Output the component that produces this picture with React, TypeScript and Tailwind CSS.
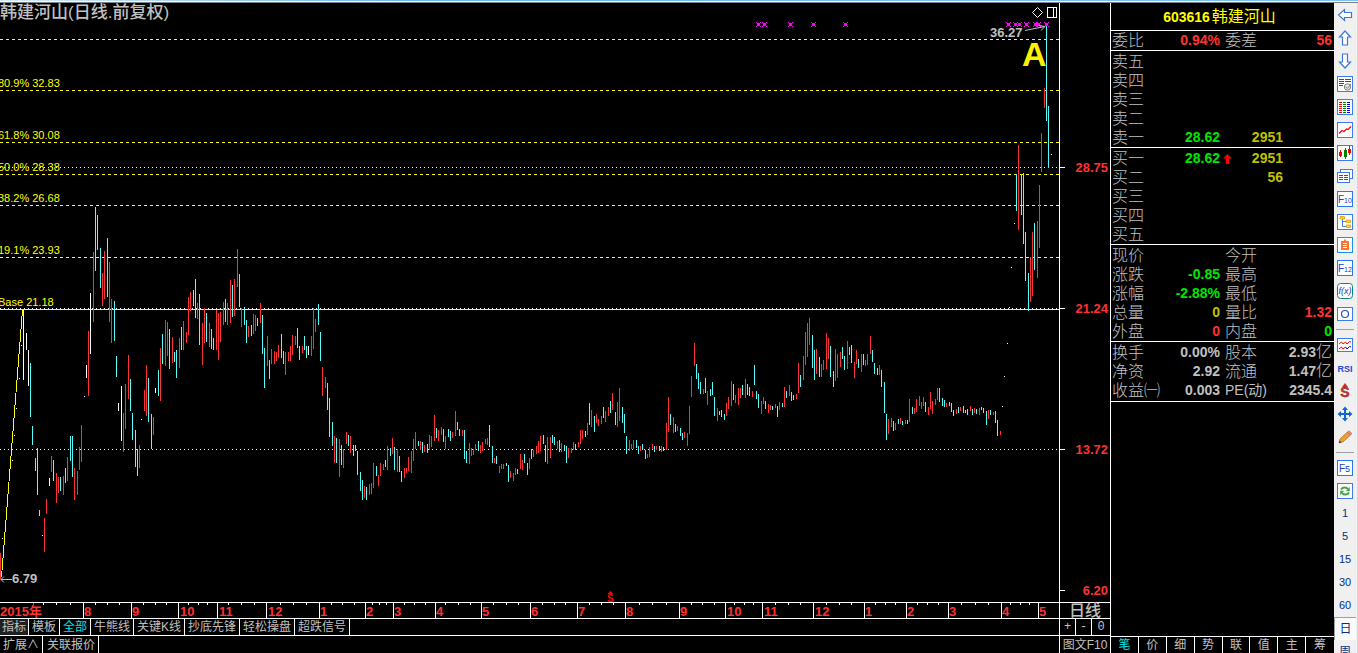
import type { ReactNode } from 'react';

type Bar = [x: number, top: number, bottom: number];

const RED_BARS: Bar[] = [
  [0, 553, 579], [44, 518, 552], [46, 499, 514], [51, 456, 472], [56, 473, 503], [58, 477, 493], [63, 476, 495],
  [67, 457, 481], [74, 468, 500], [77, 471, 495], [79, 447, 470], [81, 425, 462], [88, 331, 396], [93, 252, 322],
  [102, 273, 306], [104, 251, 299], [109, 262, 322], [111, 299, 343], [123, 413, 452], [125, 384, 429], [128, 355, 399],
  [139, 445, 468], [144, 390, 411], [146, 365, 416], [153, 417, 435], [160, 348, 401], [165, 320, 366], [167, 322, 356],
  [172, 337, 363], [179, 338, 368], [183, 321, 350], [186, 332, 343], [188, 297, 335], [190, 292, 311], [197, 303, 319],
  [202, 323, 365], [204, 308, 343], [209, 323, 347], [216, 310, 350], [218, 313, 360], [220, 312, 342], [223, 302, 325],
  [227, 303, 325], [230, 280, 323], [234, 279, 316], [237, 249, 287], [241, 308, 327], [248, 326, 337], [253, 314, 334],
  [255, 315, 331], [260, 303, 323], [267, 336, 366], [271, 349, 364], [274, 351, 364], [276, 352, 361], [278, 345, 358],
  [285, 352, 375], [288, 352, 361], [290, 346, 361], [292, 335, 355], [295, 336, 345], [302, 346, 353], [311, 336, 356],
  [313, 308, 349], [315, 319, 332], [322, 367, 396], [325, 377, 388], [334, 436, 463], [339, 439, 477], [343, 449, 468],
  [346, 432, 444], [350, 436, 453], [364, 486, 498], [369, 484, 495], [371, 483, 494], [373, 463, 488], [378, 475, 486],
  [380, 463, 476], [383, 464, 470], [387, 446, 470], [392, 438, 454], [397, 449, 472], [404, 468, 478], [406, 468, 473],
  [408, 457, 471], [411, 451, 473], [413, 439, 461], [415, 432, 449], [420, 441, 450], [424, 445, 452], [429, 435, 450],
  [431, 436, 447], [434, 415, 441], [438, 430, 441], [441, 427, 435], [445, 436, 449], [452, 432, 438], [455, 411, 436],
  [462, 430, 436], [469, 443, 464], [471, 448, 456], [473, 449, 455], [475, 444, 450], [480, 445, 453], [482, 442, 451],
  [485, 439, 444], [487, 438, 445], [494, 458, 463], [499, 466, 473], [501, 464, 469], [503, 464, 469], [510, 471, 478],
  [513, 473, 481], [515, 468, 475], [520, 454, 469], [522, 460, 470], [529, 458, 469], [533, 450, 457], [536, 446, 454],
  [538, 441, 453], [540, 436, 451], [547, 437, 464], [550, 437, 458], [557, 441, 449], [561, 443, 452], [568, 448, 458],
  [571, 448, 453], [573, 442, 450], [578, 442, 447], [580, 430, 444], [582, 430, 439], [587, 423, 435], [591, 410, 427],
  [596, 414, 423], [598, 419, 426], [601, 416, 424], [605, 411, 422], [608, 407, 416], [612, 393, 410], [617, 402, 427],
  [619, 388, 421], [629, 440, 451], [631, 444, 449], [633, 440, 449], [640, 446, 451], [647, 454, 458], [649, 447, 457],
  [652, 444, 449], [656, 446, 450], [661, 446, 452], [666, 423, 450], [668, 397, 432], [673, 417, 433], [677, 426, 431],
  [684, 432, 438], [687, 433, 446], [689, 406, 434], [691, 376, 397], [694, 343, 366], [703, 389, 394], [707, 391, 405],
  [717, 408, 421], [726, 403, 416], [728, 397, 409], [731, 381, 406], [735, 395, 403], [738, 388, 405], [740, 388, 398],
  [745, 379, 398], [752, 391, 397], [761, 401, 414], [763, 397, 404], [768, 404, 413], [770, 405, 410], [775, 404, 408],
  [779, 402, 410], [784, 387, 407], [789, 385, 396], [796, 394, 399], [798, 363, 393], [803, 356, 380], [805, 332, 365],
  [807, 323, 357], [809, 318, 345], [816, 349, 374], [821, 364, 377], [823, 360, 370], [826, 333, 369], [828, 338, 359],
  [835, 349, 381], [837, 354, 378], [840, 352, 367], [847, 341, 369], [854, 362, 378], [856, 350, 364], [861, 354, 372],
  [865, 360, 366], [867, 354, 365], [870, 336, 354], [879, 365, 375], [888, 419, 434], [891, 418, 427], [895, 423, 430],
  [900, 418, 424], [905, 420, 424], [909, 399, 422], [914, 408, 414], [916, 399, 412], [919, 396, 406], [921, 402, 409],
  [923, 397, 406], [928, 407, 415], [930, 392, 409], [932, 401, 414], [935, 399, 405], [937, 388, 400], [946, 403, 407],
  [956, 409, 414], [960, 407, 411], [970, 406, 411], [974, 408, 413], [979, 408, 415], [988, 410, 419], [993, 412, 415],
  [1000, 431, 435], [1018, 145, 230], [1030, 257, 302], [1032, 232, 296], [1037, 221, 278], [1039, 185, 248],
  [1041, 133, 172], [1044, 88, 108],
];

const CYAN_BARS: Bar[] = [
  [30, 363, 417], [32, 426, 445], [35, 458, 471], [37, 448, 495], [39, 510, 516], [53, 460, 481], [60, 477, 491],
  [65, 468, 483], [70, 436, 461], [72, 436, 477], [95, 207, 271], [97, 215, 250], [100, 248, 288], [107, 238, 297],
  [114, 301, 341], [116, 356, 377], [130, 379, 411], [132, 413, 440], [135, 430, 467], [137, 449, 476], [148, 378, 422],
  [151, 414, 449], [158, 370, 396], [162, 334, 364], [169, 329, 369], [174, 352, 362], [176, 350, 378], [181, 327, 350],
  [193, 290, 306], [195, 279, 318], [199, 294, 345], [206, 313, 342], [211, 329, 349], [213, 338, 350], [225, 299, 322],
  [232, 285, 317], [239, 274, 307], [244, 307, 325], [246, 320, 343], [251, 325, 336], [257, 318, 326], [262, 315, 354],
  [264, 348, 388], [269, 360, 379], [281, 334, 358], [283, 351, 364], [297, 328, 348], [299, 346, 360], [304, 336, 350],
  [306, 346, 358], [318, 304, 325], [320, 332, 361], [327, 383, 410], [329, 398, 437], [332, 422, 446], [336, 438, 463],
  [341, 445, 465], [348, 435, 446], [353, 445, 456], [355, 445, 451], [357, 451, 475], [360, 472, 491], [362, 480, 500],
  [366, 487, 500], [376, 466, 476], [385, 460, 467], [390, 448, 456], [394, 447, 470], [399, 456, 472], [401, 471, 482],
  [418, 441, 446], [422, 442, 453], [427, 444, 453], [436, 428, 438], [443, 429, 442], [448, 429, 437], [450, 431, 441],
  [457, 422, 430], [459, 429, 436], [464, 430, 459], [466, 451, 463], [478, 441, 451], [489, 425, 447], [492, 446, 463],
  [496, 456, 464], [506, 463, 466], [508, 465, 482], [517, 469, 474], [524, 454, 463], [527, 463, 475], [531, 449, 459],
  [543, 435, 444], [545, 445, 462], [552, 435, 443], [554, 437, 445], [559, 440, 452], [564, 445, 451], [566, 446, 463],
  [575, 444, 450], [585, 431, 437], [589, 403, 425], [594, 416, 432], [603, 407, 418], [610, 401, 413], [615, 412, 425],
  [622, 407, 423], [624, 414, 433], [626, 436, 454], [636, 440, 448], [638, 446, 454], [642, 444, 450], [645, 450, 459],
  [654, 446, 452], [659, 446, 451], [663, 447, 451], [670, 414, 425], [675, 424, 432], [680, 428, 436], [682, 433, 440],
  [696, 364, 379], [698, 373, 389], [700, 382, 394], [705, 378, 393], [710, 389, 396], [712, 382, 395], [714, 397, 416],
  [719, 411, 415], [721, 410, 417], [724, 414, 420], [733, 384, 400], [742, 385, 395], [747, 384, 395], [749, 387, 396],
  [754, 365, 385], [756, 391, 399], [758, 394, 408], [765, 401, 409], [772, 406, 410], [777, 406, 417], [782, 403, 407],
  [786, 391, 398], [791, 392, 401], [793, 395, 400], [800, 375, 387], [812, 335, 368], [814, 350, 380], [819, 357, 377],
  [830, 346, 377], [833, 371, 387], [842, 347, 359], [844, 356, 370], [849, 347, 355], [851, 345, 363], [858, 359, 368],
  [863, 354, 365], [872, 350, 362], [874, 363, 374], [877, 368, 375], [881, 370, 387], [884, 382, 413], [886, 414, 440],
  [893, 421, 431], [898, 419, 424], [902, 421, 425], [907, 420, 424], [912, 407, 414], [925, 402, 412], [939, 388, 402],
  [942, 398, 406], [944, 400, 407], [949, 402, 406], [951, 403, 412], [953, 410, 416], [958, 407, 413], [963, 406, 413],
  [965, 410, 413], [967, 409, 415], [972, 409, 415], [976, 409, 414], [981, 407, 410], [983, 408, 413], [986, 411, 425],
  [990, 410, 415], [995, 411, 423], [997, 420, 436], [1016, 174, 211], [1021, 174, 215], [1023, 173, 244],
  [1025, 232, 281], [1028, 273, 311], [1034, 223, 270], [1046, 26, 121], [1048, 106, 168],
];

const WHITE_BARS: Bar[] = [
  [2, 538, 539], [12, 460, 461], [14, 435, 436], [16, 408, 409], [19, 378, 379], [21, 345, 346], [23, 310, 380],
  [26, 333, 350], [28, 350, 386], [42, 535, 536], [49, 478, 486], [84, 396, 397], [86, 365, 378], [90, 293, 354],
  [118, 403, 411], [121, 386, 441], [141, 419, 420], [155, 388, 393], [308, 346, 355], [1002, 406, 407],
  [1004, 376, 377], [1007, 343, 344], [1009, 307, 308], [1011, 267, 268], [1014, 223, 224], [1051, 154, 155],
];

const FIB_LINES = [39, 90, 142, 174, 205, 257];

const FIB_LABELS = [
  { y: 87, text: '80.9% 32.83' },
  { y: 139, text: '61.8% 30.08' },
  { y: 171, text: '50.0% 28.38' },
  { y: 202, text: '38.2% 26.68' },
  { y: 254, text: '19.1% 23.93' },
  { y: 306, text: 'Base 21.18' },
];

const PRICES = [
  { y: 167, text: '28.75' },
  { y: 308, text: '21.24' },
  { y: 449, text: '13.72' },
  { y: 590, text: '6.20' },
];

const MARKERS = [758, 764, 790, 813, 845, 1008, 1015, 1019, 1026, 1035, 1038, 1046];

const MONTHS: [number, string][] = [
  [83, '8'], [131, '9'], [178, '10'], [217, '11'], [266, '12'], [319, '1'], [365, '2'], [393, '3'], [435, '4'],
  [481, '5'], [530, '6'], [577, '7'], [625, '8'], [679, '9'], [725, '10'], [762, '11'], [813, '12'], [864, '1'],
  [906, '2'], [948, '3'], [1001, '4'], [1038, '5'],
];

const WEEK_TICKS = [
  43, 56, 70, 95, 107, 119, 143, 155, 166, 188, 198, 207, 228, 241, 254, 280, 293, 306, 331, 342, 354, 372, 379, 386,
  404, 414, 425, 445, 458, 470, 493, 506, 518, 542, 554, 565, 589, 601, 613, 639, 652, 666, 691, 702, 714, 734, 744,
  753, 775, 788, 800, 826, 839, 851, 875, 885, 895, 917, 927, 938, 961, 975, 988, 1010, 1020, 1029,
];

const barPath = (bars: Bar[]) => bars.map(([x, top, bottom]) => `M${x + 0.5} ${top}V${bottom}`).join('');

const NUM = "font-['Liberation_Sans','Noto_Sans_CJK_SC',sans-serif] font-bold";

function KLineChart() {
  return (
    <svg viewBox="0 3 1110 599" className="block w-full h-auto shrink-0 overflow-visible" role="img" aria-label="韩建河山 日线">
      <g stroke="#ffff00" strokeDasharray="3 3" shapeRendering="crispEdges">
        {FIB_LINES.map((y) => (
          <path key={y} d={`M0 ${y + 0.5}H1059`} />
        ))}
      </g>
      <g stroke="#ffffff" strokeDasharray="1 3" shapeRendering="crispEdges">
        {[167, 308, 449].map((y) => (
          <path key={y} d={`M0 ${y + 0.5}H1059`} />
        ))}
      </g>
      <path d="M0 309.5H1059" stroke="#ffff00" shapeRendering="crispEdges" />

      <g fill="none" shapeRendering="crispEdges">
        <path d={barPath(RED_BARS)} stroke="#ff3232" />
        <path d={barPath(CYAN_BARS)} stroke="#54fcfc" />
        <path d={barPath(WHITE_BARS)} stroke="#ffffff" />
        <path d="M1.5 577L22.5 310" stroke="#ffff00" />
      </g>

      <g fill="#ffff00" className="font-['Liberation_Sans',sans-serif] text-[11px]">
        {FIB_LABELS.map((label) => (
          <text key={label.text} x="-2" y={label.y}>{label.text}</text>
        ))}
      </g>

      <g fill="#ff00ff" shapeRendering="crispEdges">
        {MARKERS.map((x) => (
          <path
            key={x}
            d={`M${x - 1} 23h3v3h-3zM${x - 2} 22h1v1h-1zM${x + 2} 22h1v1h-1zM${x - 2} 26h1v1h-1zM${x + 2} 26h1v1h-1z`}
          />
        ))}
      </g>

      <text x="0" y="18" fill="#c0c0c0" className="font-['Liberation_Sans','Noto_Sans_CJK_SC',sans-serif] text-[17px] font-medium">
        韩建河山(日线.前复权)
      </text>

      <g fill="#c0c0c0" className={`${NUM} text-[13px]`}>
        <text x="990" y="37">36.27</text>
        <text x="12" y="583">6.79</text>
      </g>
      <g fill="none" stroke="#c0c0c0">
        <path d="M1025 30.5L1045 26.5M1039 25.5L1045 26.5L1041 30.5" />
        <path d="M1 579.5H12M4 576.5L1 579.5L4 582.5" />
      </g>
      <text x="1022" y="66" fill="#fff000" className={`${NUM} text-[34px]`}>A</text>

      <g fill="none" stroke="#ffffff">
        <path d="M1037.5 7.5L1042.5 12.5L1037.5 17.5L1032.5 12.5Z" />
        <path d="M1047.5 7.5H1056.5V17.5H1047.5ZM1053.5 7.5V17.5" shapeRendering="crispEdges" />
      </g>

      <g fill="#ff0000">
        <path d="M610.5 591L613.5 594H607.5Z" />
        <text x="607" y="602" className={`${NUM} text-[10px]`}>S</text>
      </g>

      <path d="M1059.5 3V602" stroke="#ffffff" shapeRendering="crispEdges" />
      {PRICES.map((price) => (
        <g key={price.text}>
          <path d={`M1060 ${price.y + 0.5}H1065`} stroke="#ffffff" shapeRendering="crispEdges" />
          <text x="1108" y={price.y + 5} textAnchor="end" fill="#ff3232" className={`${NUM} text-[13px]`}>
            {price.text}
          </text>
        </g>
      ))}
    </svg>
  );
}

function TimeAxis() {
  return (
    <svg viewBox="0 602 1059 17" className="block flex-1 min-w-0 h-auto" role="img" aria-label="时间轴">
      <g fill="none" stroke="#ffffff" shapeRendering="crispEdges">
        <path d="M0 602.5H1059M0 618.5H1059" />
        <path d={MONTHS.map(([x]) => `M${x + 0.5} 602V618`).join('')} />
        <path d={WEEK_TICKS.map((x) => `M${x + 0.5} 602V605`).join('')} />
        <path d="M33.5 603V605" stroke="#ff3232" />
      </g>
      <g fill="#ff3232" className={`${NUM} text-[13px]`}>
        <text x="0" y="616">2015年</text>
        {MONTHS.map(([x, label]) => (
          <text key={x} x={label.length > 1 ? x + 2 : x + 1} y="616">{label}</text>
        ))}
      </g>
    </svg>
  );
}

function IndicatorTabs() {
  const tabs = ['牛熊线', '关键K线', '抄底先锋', '轻松操盘', '超跌信号'];

  return (
    <div className="flex h-[17px] shrink-0 border-b border-white text-xs leading-4">
      <button className="px-0.5 bg-[#202020] border-r border-white">指标</button>
      <button className="px-[3px] border-r border-white">模板</button>
      <button className="px-[3px] border-r border-white text-[#00e6e6]">全部</button>
      {tabs.map((tab) => (
        <button key={tab} className="px-[3px] border-r border-white">{tab}</button>
      ))}
      <div className="ml-auto flex w-[51px] border-l border-white font-['Liberation_Mono',monospace]">
        <button className="w-4 border-r border-white">+</button>
        <button className="w-4 border-r border-white">-</button>
        <button className="flex-1">0</button>
      </div>
    </div>
  );
}

function ExtendTabs() {
  return (
    <div className="flex h-[17px] shrink-0 text-xs leading-4">
      <button className="px-[3px] border-r border-white">扩展∧</button>
      <button className="pl-1 pr-[3px] border-r border-white">关联报价</button>
      <button className="ml-auto w-[51px] border-l border-white whitespace-nowrap">图文F10</button>
    </div>
  );
}

interface OrderRow {
  label: string;
  price?: string;
  up?: boolean;
  volume?: string;
}

const SELLS: OrderRow[] = [
  { label: '卖五' },
  { label: '卖四' },
  { label: '卖三' },
  { label: '卖二' },
  { label: '卖一', price: '28.62', volume: '2951' },
];

const BUYS: OrderRow[] = [
  { label: '买一', price: '28.62', up: true, volume: '2951' },
  { label: '买二', volume: '56' },
  { label: '买三' },
  { label: '买四' },
  { label: '买五' },
];

function OrderTable({ rows }: { rows: OrderRow[] }) {
  return (
    <div className="pt-px border-b border-white">
      <table className="w-full table-fixed border-collapse">
        <colgroup>
          <col className="w-[49px]" />
          <col className="w-[60px]" />
          <col className="w-3" />
          <col className="w-[51px]" />
          <col />
        </colgroup>
        <tbody>
          {rows.map((row) => (
            <tr key={row.label} className="h-[19px]">
              <th scope="row" className="p-0 pl-px text-left text-base leading-[19px] font-light">{row.label}</th>
              <td className={`p-0 text-right text-sm leading-[19px] text-[#00e600] ${NUM}`}>{row.price}</td>
              <td className="p-0">
                {row.up && (
                  <svg viewBox="0 0 9 10" className="block ml-[3px] w-[9px] h-[10px]" fill="#ff0000" aria-label="上涨">
                    <path d="M4.5 0L9 4.5H6V10H3V4.5H0Z" />
                  </svg>
                )}
              </td>
              <td className={`p-0 text-right text-sm leading-[19px] text-[#c0c000] ${NUM}`}>{row.volume}</td>
              <td />
            </tr>
          ))}
        </tbody>
      </table>
    </div>
  );
}

interface QuoteCell {
  label: string;
  value?: string;
  color?: string;
}

const RATIO: QuoteCell[][] = [
  [
    { label: '委比', value: '0.94%', color: 'text-[#ff3232]' },
    { label: '委差', value: '56', color: 'text-[#ff3232]' },
  ],
];

const QUOTE: QuoteCell[][] = [
  [{ label: '现价' }, { label: '今开' }],
  [{ label: '涨跌', value: '-0.85', color: 'text-[#00e600]' }, { label: '最高' }],
  [{ label: '涨幅', value: '-2.88%', color: 'text-[#00e600]' }, { label: '最低' }],
  [
    { label: '总量', value: '0', color: 'text-[#c0c000]' },
    { label: '量比', value: '1.32', color: 'text-[#ff3232]' },
  ],
  [
    { label: '外盘', value: '0', color: 'text-[#ff3232]' },
    { label: '内盘', value: '0', color: 'text-[#00e600]' },
  ],
];

const FINANCE: QuoteCell[][] = [
  [{ label: '换手', value: '0.00%' }, { label: '股本', value: '2.93亿' }],
  [{ label: '净资', value: '2.92' }, { label: '流通', value: '1.47亿' }],
  [{ label: '收益㈠', value: '0.003' }, { label: 'PE(动)', value: '2345.4' }],
];

function QuoteTable({ rows }: { rows: QuoteCell[][] }) {
  return (
    <table className="w-full table-fixed border-collapse">
      <colgroup>
        <col className="w-[52px]" />
        <col className="w-[57px]" />
        <col className="w-[52px]" />
        <col />
      </colgroup>
      <tbody>
        {rows.map(([left, right]) => (
          <tr key={left.label} className="h-[19px]">
            <th scope="row" className="p-0 pl-px text-left text-base leading-[19px] font-light whitespace-nowrap">{left.label}</th>
            <td className={`p-0 text-right text-sm leading-[19px] ${NUM} ${left.color ?? ''}`}>{left.value}</td>
            <th
              scope="row"
              className={`p-0 pl-[5px] text-left leading-[19px] whitespace-nowrap ${
                right.label.startsWith('PE') ? 'text-sm font-normal' : 'text-base font-light'
              }`}
            >
              {right.label}
            </th>
            <td className={`p-0 pr-0.5 text-right text-sm leading-[19px] whitespace-nowrap ${NUM} ${right.color ?? ''}`}>
              {right.value?.replace('亿', '')}
              {right.value?.endsWith('亿') && <span className="text-base leading-none font-light">亿</span>}
            </td>
          </tr>
        ))}
      </tbody>
    </table>
  );
}

function QuotePanel() {
  const tabs = ['笔', '价', '细', '势', '联', '值', '主', '筹'];

  return (
    <aside className="flex flex-col w-56 shrink-0 border-l border-white">
      <h1 className="flex items-center justify-center gap-0.5 h-7 pr-1.5 border-b border-white text-[#ffff00]">
        <span className={`text-sm ${NUM}`}>603616</span>
        <span className="text-base leading-none">韩建河山</span>
      </h1>
      <div className="border-b border-white">
        <QuoteTable rows={RATIO} />
      </div>
      <OrderTable rows={SELLS} />
      <OrderTable rows={BUYS} />
      <div className="pt-px border-b border-white">
        <QuoteTable rows={QUOTE} />
      </div>
      <div className="py-px border-b border-white">
        <QuoteTable rows={FINANCE} />
      </div>
      <nav className="mt-auto grid grid-cols-8 h-[17px] border-t border-white text-xs leading-4">
        {tabs.map((tab, i) => (
          <button key={tab} className={i === 0 ? 'border-r border-white text-[#00e6e6]' : 'border-r border-white last:border-r-0'}>
            {tab}
          </button>
        ))}
      </nav>
    </aside>
  );
}

function Framed({ color = '#3c7cf0', children }: { color?: string; children: ReactNode }) {
  return (
    <>
      <rect x="0.5" y="0.5" width="15" height="15" fill="#ffffff" stroke={color} />
      {children}
    </>
  );
}

const iconText = "font-['Liberation_Sans',sans-serif]";

const TOOLS_TOP: { name: string; icon: ReactNode }[] = [
  { name: '后退', icon: <path d="M1.5 8L7.5 2.5V5.5H14.5V10.5H7.5V13.5Z" fill="#fff" stroke="#3c78dc" strokeWidth="1.2" /> },
  { name: '上翻', icon: <path d="M8 1L13.5 7H10.5V15H5.5V7H2.5Z" fill="#fff" stroke="#3c78dc" strokeWidth="1.2" /> },
  { name: '下翻', icon: <path d="M8 15L13.5 9H10.5V1H5.5V9H2.5Z" fill="#fff" stroke="#3c78dc" strokeWidth="1.2" /> },
  {
    name: '报价分析',
    icon: (
      <Framed>
        <path d="M2 3.5H7M2 5.5H7M2 7.5H7M2 9.5H6" stroke="#008000" />
        <path d="M8 3.5H14M8 5.5H14" stroke="#ff0000" />
        <circle cx="10.5" cy="11" r="3.2" fill="#e8e8e8" stroke="#808080" />
        <path d="M8.5 10.5L10.3 12.5L14 8" fill="none" stroke="#808080" />
      </Framed>
    ),
  },
  {
    name: '行情列表',
    icon: (
      <Framed>
        <g fill="none" strokeDasharray="1 1">
          <path d="M3.5 3V14" stroke="#ff0000" strokeWidth="3" />
          <path d="M7.5 3V14" stroke="#008000" strokeWidth="3" />
          <path d="M11.5 3V14" stroke="#0000ff" strokeWidth="3" />
        </g>
      </Framed>
    ),
  },
  {
    name: '分时走势',
    icon: (
      <Framed>
        <path d="M2 11.5L5 8.5L7 9.5L9.5 7L11 7.5L14 4.5" fill="none" stroke="#ff0000" strokeWidth="1.2" />
      </Framed>
    ),
  },
  {
    name: 'K线图',
    icon: (
      <Framed>
        <path d="M3.5 5V12M12.5 1V10" stroke="#ff0000" />
        <path d="M8.5 3V14" stroke="#008000" />
        <path d="M2 7H5V11H2ZM11 4H14V8H11Z" fill="#ff0000" />
        <path d="M7 5H10V12H7Z" fill="#008000" />
      </Framed>
    ),
  },
  {
    name: '多窗口',
    icon: (
      <>
        <rect x="3.5" y="1.5" width="12" height="9" fill="#fff" stroke="#3c7cf0" />
        <rect x="0.5" y="4.5" width="12" height="10" fill="#fff" stroke="#3c7cf0" />
        <path d="M2 7.5H6M7 7.5H11M2 9.5H6M7 9.5H11M2 11.5H6M7 11.5H11" stroke="#505050" />
      </>
    ),
  },
  {
    name: '基本资料',
    icon: (
      <Framed color="#2878f0">
        <text x="1" y="12" fill="#2040c8" className={`${iconText} text-[10px]`}>F</text>
        <text x="7" y="12" fill="#2040c8" className={`${iconText} text-[7px]`}>10</text>
      </Framed>
    ),
  },
  {
    name: '板块树',
    icon: (
      <Framed>
        <path d="M5.5 5V12.5H9M5.5 7.5H9" fill="none" stroke="#3c7cf0" />
        <path d="M3 2.5H7.5V5H3ZM9.5 6H13.5V8.5H9.5ZM9.5 11H13.5V13.5H9.5Z" fill="#ffd24a" stroke="#dca000" strokeWidth="0.8" />
      </Framed>
    ),
  },
  {
    name: '自选股',
    icon: (
      <Framed color="#1c8ef0">
        <path d="M7 2.5H9V4H12V13H4V4H7Z" fill="#ff7832" />
        <path d="M6 6.5H10M6 8.5H10M6 10.5H10" stroke="#fff" />
      </Framed>
    ),
  },
  {
    name: '快讯',
    icon: (
      <Framed color="#2878f0">
        <text x="1" y="12" fill="#2040c8" className={`${iconText} text-[10px]`}>F</text>
        <text x="7" y="12" fill="#2040c8" className={`${iconText} text-[7px]`}>12</text>
      </Framed>
    ),
  },
  {
    name: '公式',
    icon: (
      <>
        <rect x="0.5" y="0.5" width="15" height="15" rx="3" fill="#fff" stroke="#108080" />
        <text x="8" y="11" textAnchor="middle" fill="#2040c8" className={`${iconText} text-[9px] italic`}>f(x)</text>
      </>
    ),
  },
  {
    name: '周期',
    icon: (
      <>
        <rect x="0.5" y="1.5" width="15" height="13" fill="#fff" stroke="#3c7cf0" />
        <circle cx="8" cy="8" r="3.5" fill="none" stroke="#2050c8" strokeWidth="1.2" />
      </>
    ),
  },
];

const TOOLS_MIDDLE: { name: string; icon: ReactNode }[] = [
  {
    name: '叠加指标',
    icon: (
      <>
        <rect x="0.5" y="1.5" width="15" height="13" fill="#fff" stroke="#3c7cf0" />
        <g fill="none">
          <path d="M2 7L4.5 5L6 7L8.5 5L10 7L12.5 4.5L14 5" stroke="#ff0000" />
          <path d="M2 12L4.5 10L6 12L8.5 10" stroke="#ff0000" />
          <path d="M8.5 10L10 12L12.5 9.5L14 10" stroke="#0000ff" />
        </g>
      </>
    ),
  },
  {
    name: 'RSI',
    icon: <text x="8" y="12" textAnchor="middle" fill="#2844d8" className={`${iconText} text-[9px] font-bold`}>RSI</text>,
  },
  {
    name: '除权',
    icon: (
      <g>
        <path d="M8 0L11 4H5Z" fill="#c83232" />
        <text x="8" y="14" textAnchor="middle" fill="#c83232" stroke="#802020" strokeWidth="0.4" className={`${iconText} text-[14px] font-bold`}>S</text>
      </g>
    ),
  },
  {
    name: '移动',
    icon: (
      <g fill="#1464d2">
        <path d="M8 0.5L11 4H5ZM8 15.5L11 12H5ZM0.5 8L4 5V11ZM15.5 8L12 5V11Z" />
        <path d="M7 3.5H9V7H12.5V9H9V12.5H7V9H3.5V7H7Z" />
      </g>
    ),
  },
  {
    name: '画线',
    icon: (
      <g>
        <path d="M2 14L3.2 9.8L10.5 3L13.5 6L6.2 12.8Z" fill="#f0a030" stroke="#8c5a1e" strokeWidth="0.6" />
        <path d="M10.5 3L12 1.8L15 4.6L13.5 6Z" fill="#f08c8c" stroke="#a05050" strokeWidth="0.5" />
        <path d="M2 14L2.7 11.6L4.4 13.3Z" fill="#303030" />
      </g>
    ),
  },
];

const TOOLS_BOTTOM: { name: string; icon: ReactNode }[] = [
  {
    name: '切换',
    icon: (
      <Framed color="#2878f0">
        <text x="2" y="12" fill="#2040c8" className={`${iconText} text-[10px]`}>F</text>
        <text x="8" y="12" fill="#2040c8" className={`${iconText} text-[9px]`}>5</text>
      </Framed>
    ),
  },
  {
    name: '刷新',
    icon: (
      <Framed>
        <g fill="none" stroke="#46a046" strokeWidth="2">
          <path d="M4 6.5C5.5 3.8 9 3.8 11 6" />
          <path d="M12 9.5C10.5 12.2 7 12.2 5 10" />
        </g>
        <path d="M12.8 4V8.3H8.8ZM3.2 12V7.7H7.2Z" fill="#46a046" />
      </Framed>
    ),
  },
];

function ToolButtons({ items }: { items: { name: string; icon: ReactNode }[] }) {
  return items.map((item) => (
    <button key={item.name} aria-label={item.name} className="flex h-[23px] pt-1 shrink-0 items-start justify-center">
      <svg viewBox="0 0 16 16" className="w-4 h-4">{item.icon}</svg>
    </button>
  ));
}

function Separator() {
  return (
    <div className="flex h-2 shrink-0 items-center px-0.5">
      <hr className="w-full border-t border-[#a0a0a0]" />
    </div>
  );
}

function Toolbar() {
  return (
    <nav className="flex flex-col w-6 pr-px shrink-0 overflow-hidden bg-[#f0f0f0] border-r border-[#d8d8d8] text-[#003384]">
      <ToolButtons items={TOOLS_TOP} />
      <Separator />
      <ToolButtons items={TOOLS_MIDDLE} />
      <Separator />
      <ToolButtons items={TOOLS_BOTTOM} />
      {['1', '5', '15', '30', '60'].map((period) => (
        <button key={period} className="h-[23px] shrink-0 text-[11px]">
          {period}
        </button>
      ))}
      <button className="h-[23px] shrink-0 border-t border-l border-[#a0a0a0] bg-[#fafafa] text-xs">日</button>
      <button className="h-[23px] shrink-0 text-xs">周</button>
    </nav>
  );
}

export default function App() {
  return (
    <div className="flex flex-col h-screen overflow-hidden bg-black text-[#c0c0c0] font-['Liberation_Sans','Noto_Sans_CJK_SC',sans-serif]">
      <div className="h-px shrink-0 bg-linear-to-r from-[#d4ecfa] via-[#6cb8ec] via-30% to-[#7cc4f0]" />
      <div className="h-px shrink-0 bg-white" />
      <div className="h-px shrink-0 bg-[#808088]" />
      <div className="flex flex-1 min-h-0">
        <main className="flex flex-col flex-1 min-w-0">
          <KLineChart />
          <div className="flex shrink-0">
            <TimeAxis />
            <div className="flex w-[51px] shrink-0 items-center justify-center border-y border-l border-white text-base leading-[15px] font-medium">
              日线
            </div>
          </div>
          <IndicatorTabs />
          <ExtendTabs />
        </main>
        <QuotePanel />
        <Toolbar />
      </div>
    </div>
  );
}
